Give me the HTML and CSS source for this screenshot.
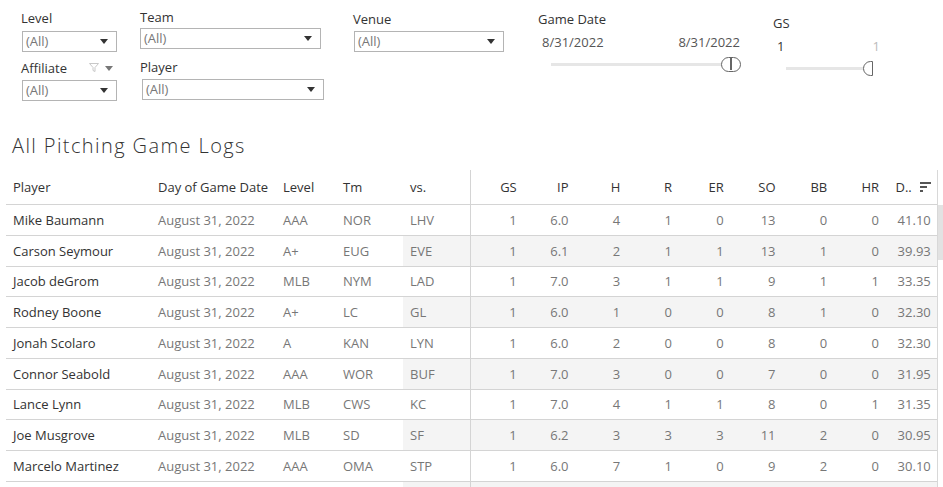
FILE: index.html
```html
<!DOCTYPE html>
<html>
<head>
<meta charset="utf-8">
<title>All Pitching Game Logs</title>
<link rel="stylesheet" href="styles.css">
</head>
<body>
<div class="filters">
  <div class="fcol col1">
    <div class="flabel lbl-level">Level</div>
    <div class="dd dd-level"><span>(All)</span><i class="caret"></i></div>
    <div class="flabel lbl-aff"><span class="aff-text">Affiliate</span>
      <svg class="funnel" width="10" height="9" viewBox="0 0 10 9"><path d="M0.5 0.5 H9.5 L6 4.5 V8.5 L4 7.5 V4.5 Z" fill="none" stroke="#c8c8c8" stroke-width="1"/></svg>
      <i class="caret caret-sm"></i>
    </div>
    <div class="dd dd-aff"><span>(All)</span><i class="caret"></i></div>
  </div>
  <div class="fcol col2">
    <div class="flabel lbl-team">Team</div>
    <div class="dd dd-team"><span>(All)</span><i class="caret"></i></div>
    <div class="flabel lbl-player">Player</div>
    <div class="dd dd-player"><span>(All)</span><i class="caret"></i></div>
  </div>
  <div class="fcol col3">
    <div class="flabel lbl-venue">Venue</div>
    <div class="dd dd-venue"><span>(All)</span><i class="caret"></i></div>
  </div>
  <div class="fcol col4">
    <div class="flabel lbl-date">Game Date</div>
    <div class="range range-date"><span>8/31/2022</span><span>8/31/2022</span></div>
    <div class="track track-date"><div class="handle handle-pill"></div></div>
  </div>
  <div class="fcol col5">
    <div class="flabel lbl-gs">GS</div>
    <div class="range range-gs"><span class="v-dark">1</span><span class="v-light">1</span></div>
    <div class="track track-gs"><div class="handle handle-half"></div></div>
  </div>
</div>

<h1 class="title">All Pitching Game Logs</h1>

<div class="table-wrap">
  <div class="table">
    <div class="row head">
      <div class="c">Player</div>
      <div class="c">Day of Game Date</div>
      <div class="c">Level</div>
      <div class="c">Tm</div>
      <div class="c vs">vs.</div>
      <div class="c n">GS</div>
      <div class="c n">IP</div>
      <div class="c n">H</div>
      <div class="c n">R</div>
      <div class="c n">ER</div>
      <div class="c n">SO</div>
      <div class="c n">BB</div>
      <div class="c n">HR</div>
      <div class="c n last">D..<span class="sort"><b class="b1"></b><b class="b2"></b><b class="b3"></b></span></div>
    </div>

    <div class="row">
      <div class="c name">Mike Baumann</div><div class="c g">August 31, 2022</div><div class="c g">AAA</div><div class="c g">NOR</div><div class="c g vs">LHV</div>
      <div class="c n">1</div><div class="c n">6.0</div><div class="c n">4</div><div class="c n">1</div><div class="c n">0</div><div class="c n">13</div><div class="c n">0</div><div class="c n">0</div><div class="c n last">41.10</div>
    </div>
    <div class="row alt">
      <div class="c name">Carson Seymour</div><div class="c g">August 31, 2022</div><div class="c g">A+</div><div class="c g">EUG</div><div class="c g vs">EVE</div>
      <div class="c n">1</div><div class="c n">6.1</div><div class="c n">2</div><div class="c n">1</div><div class="c n">1</div><div class="c n">13</div><div class="c n">1</div><div class="c n">0</div><div class="c n last">39.93</div>
    </div>
    <div class="row">
      <div class="c name">Jacob deGrom</div><div class="c g">August 31, 2022</div><div class="c g">MLB</div><div class="c g">NYM</div><div class="c g vs">LAD</div>
      <div class="c n">1</div><div class="c n">7.0</div><div class="c n">3</div><div class="c n">1</div><div class="c n">1</div><div class="c n">9</div><div class="c n">1</div><div class="c n">1</div><div class="c n last">33.35</div>
    </div>
    <div class="row alt">
      <div class="c name">Rodney Boone</div><div class="c g">August 31, 2022</div><div class="c g">A+</div><div class="c g">LC</div><div class="c g vs">GL</div>
      <div class="c n">1</div><div class="c n">6.0</div><div class="c n">1</div><div class="c n">0</div><div class="c n">0</div><div class="c n">8</div><div class="c n">1</div><div class="c n">0</div><div class="c n last">32.30</div>
    </div>
    <div class="row">
      <div class="c name">Jonah Scolaro</div><div class="c g">August 31, 2022</div><div class="c g">A</div><div class="c g">KAN</div><div class="c g vs">LYN</div>
      <div class="c n">1</div><div class="c n">6.0</div><div class="c n">2</div><div class="c n">0</div><div class="c n">0</div><div class="c n">8</div><div class="c n">0</div><div class="c n">0</div><div class="c n last">32.30</div>
    </div>
    <div class="row alt">
      <div class="c name">Connor Seabold</div><div class="c g">August 31, 2022</div><div class="c g">AAA</div><div class="c g">WOR</div><div class="c g vs">BUF</div>
      <div class="c n">1</div><div class="c n">7.0</div><div class="c n">3</div><div class="c n">0</div><div class="c n">0</div><div class="c n">7</div><div class="c n">0</div><div class="c n">0</div><div class="c n last">31.95</div>
    </div>
    <div class="row">
      <div class="c name">Lance Lynn</div><div class="c g">August 31, 2022</div><div class="c g">MLB</div><div class="c g">CWS</div><div class="c g vs">KC</div>
      <div class="c n">1</div><div class="c n">7.0</div><div class="c n">4</div><div class="c n">1</div><div class="c n">1</div><div class="c n">8</div><div class="c n">0</div><div class="c n">1</div><div class="c n last">31.35</div>
    </div>
    <div class="row alt">
      <div class="c name">Joe Musgrove</div><div class="c g">August 31, 2022</div><div class="c g">MLB</div><div class="c g">SD</div><div class="c g vs">SF</div>
      <div class="c n">1</div><div class="c n">6.2</div><div class="c n">3</div><div class="c n">3</div><div class="c n">3</div><div class="c n">11</div><div class="c n">2</div><div class="c n">0</div><div class="c n last">30.95</div>
    </div>
    <div class="row">
      <div class="c name">Marcelo Martinez</div><div class="c g">August 31, 2022</div><div class="c g">AAA</div><div class="c g">OMA</div><div class="c g vs">STP</div>
      <div class="c n">1</div><div class="c n">6.0</div><div class="c n">7</div><div class="c n">1</div><div class="c n">0</div><div class="c n">9</div><div class="c n">2</div><div class="c n">0</div><div class="c n last">30.10</div>
    </div>
    <div class="row alt">
      <div class="c name"></div><div class="c g"></div><div class="c g"></div><div class="c g"></div><div class="c g vs"></div>
      <div class="c n"></div><div class="c n"></div><div class="c n"></div><div class="c n"></div><div class="c n"></div><div class="c n"></div><div class="c n"></div><div class="c n"></div><div class="c n last"></div>
    </div>
  </div>
  <div class="scrollbar"><div class="thumb"></div></div>
</div>
</body>
</html>
```

FILE: styles.css
```css
* { box-sizing: border-box; }
html, body {
  margin: 0;
  padding: 0;
  background: #fff;
  overflow: hidden;
}
body {
  width: 943px;
  height: 487px;
  font-family: "Open Sans", "Noto Sans", sans-serif;
  font-size: 13px;
  color: #333;
}

/* ---------- filters ---------- */
.filters {
  display: flex;
  align-items: flex-start;
  height: 101px;
}
.fcol { display: flex; flex-direction: column; }
.col1 { margin-left: 21px; width: 96px; }
.col2 { margin-left: 23px; width: 184px; }
.col3 { margin-left: 29px; width: 151px; }
.col4 { margin-left: 34px; width: 204px; }
.col5 { margin-left: 31px; width: 110px; }

.flabel {
  font-size: 13px;
  line-height: 16px;
  color: #333;
  white-space: nowrap;
  display: flex;
  align-items: center;
}
.lbl-level { margin-top: 10px; }
.lbl-aff { margin-top: 8px; }
.lbl-team { margin-top: 9px; }
.lbl-player { margin-top: 10px; }
.lbl-venue { margin-top: 11px; }
.lbl-date { margin-top: 11px; }
.lbl-gs { margin-top: 15px; }

.aff-text { width: 68px; }
.funnel { margin-top: -1px; }
.caret {
  display: inline-block;
  width: 0;
  height: 0;
  border-left: 4px solid transparent;
  border-right: 4px solid transparent;
  border-top: 5px solid #333;
}
.caret-sm {
  margin-left: 6px;
  border-top-color: #777;
}

.dd {
  height: 21px;
  border: 1px solid #b4b4b4;
  background: #fff;
  display: flex;
  align-items: center;
  justify-content: space-between;
  padding: 0 8px 1px 3px;
  color: #777;
  font-size: 13px;
}
.dd-level { margin-top: 5px; margin-left: 1px; width: 95px; }
.dd-aff { margin-top: 4px; margin-left: 1px; width: 95px; }
.dd-team { margin-top: 3px; width: 181px; }
.dd-player { margin-top: 4px; margin-left: 2px; width: 182px; }
.dd-venue { margin-top: 4px; margin-left: 1px; width: 150px; }

.range {
  display: flex;
  justify-content: space-between;
  line-height: 16px;
  color: #555;
}
.range-date { margin-top: 7px; padding-left: 4px; width: 202px; }
.range-gs { margin-top: 7px; padding-left: 4px; width: 107px; }
.v-dark { color: #333; }
.v-light { color: #bbb; }

.track {
  position: relative;
  height: 3px;
  background: #e6e6e6;
}
.track-date { margin-top: 13px; margin-left: 13px; width: 174px; }
.track-gs { margin-top: 13px; margin-left: 13px; width: 79px; }

.handle {
  position: absolute;
  top: -6px;
  height: 15px;
  background: #fff;
  border: 1.5px solid #666;
}
.handle-pill {
  left: 170px;
  width: 20px;
  border-radius: 8px;
}
.handle-pill::after {
  content: "";
  position: absolute;
  left: 8px;
  top: 0;
  width: 1.5px;
  height: 12px;
  background: #666;
}
.handle-half {
  left: 77px;
  width: 10px;
  border-radius: 8px 0 0 8px;
}

/* ---------- title ---------- */
.title {
  margin: 32px 0 0 12px;
  font-size: 20px;
  line-height: 26px;
  font-weight: 300;
  color: #333;
  letter-spacing: 1.4px;
}

/* ---------- table ---------- */
.table-wrap {
  display: flex;
  margin-top: 11px;
}
.table {
  margin-left: 6px;
  width: 930.75px;
}
.row {
  display: grid;
  grid-template-columns: 145px 125px 60px 67px 68px repeat(9, 51.75px);
  height: 30.75px;
  border-bottom: 1px solid #d4d4d4;
}
.row.head { height: 35px; }
.c {
  display: flex;
  align-items: center;
  padding-left: 7px;
  white-space: nowrap;
  overflow: hidden;
  font-size: 13px;
}
.head .c { color: #333; }
.c.vs { border-right: 1px solid #d4d4d4; }
.c.n {
  justify-content: flex-end;
  padding-left: 0;
  padding-right: 6px;
  color: #777;
}
.head .c.n { color: #333; }
.c.name { color: #333; }
.c.g { color: #777; }

.row.alt .c.vs,
.row.alt .c.n { background: #f4f4f4; }

.sort {
  display: inline-flex;
  flex-direction: column;
  margin-left: 8px;
  width: 11px;
  gap: 2px;
}
.sort b {
  display: block;
  height: 2px;
  background: #555;
}
.sort .b1 { width: 11px; }
.sort .b2 { width: 7px; }
.sort .b3 { width: 3px; }

.scrollbar {
  width: 6px;
  border-left: 1px solid #d8d8d8;
  height: 320px;
  padding-top: 35px;
}
.thumb {
  height: 55px;
  background: #e2e2e2;
}
```
